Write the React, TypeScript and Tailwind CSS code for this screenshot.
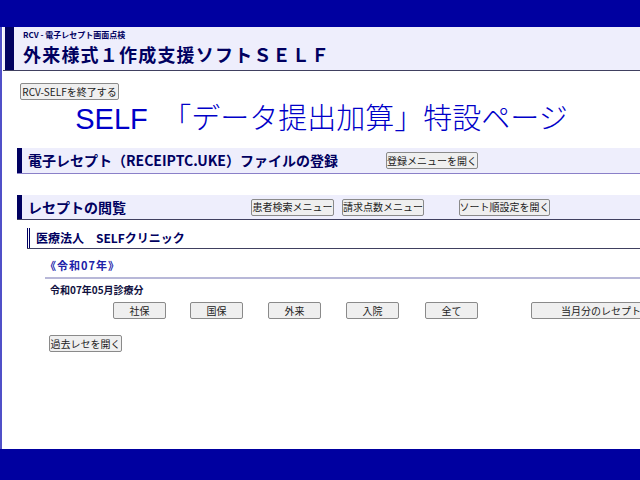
import React from "react";

const jp = { fontFamily: '"Noto Sans CJK JP", "Noto Sans", sans-serif' };

function Btn({ children, className = "" }: { children: React.ReactNode; className?: string }) {
  return (
    <button
      className={
        "h-[17px] border border-[#8a8a8a] bg-[#efefef] rounded-[2px] text-[10px] leading-none text-[#222] px-[5px] flex items-center justify-center whitespace-nowrap shrink-0 " +
        className
      }
      style={jp}
    >
      {children}
    </button>
  );
}

export default function App() {
  return (
    <div className="w-[640px] h-[480px] overflow-hidden flex flex-col bg-white" style={jp}>
      <div className="h-[27px] bg-[#0000a0] shrink-0" />
      <div className="flex-1 border-l-2 border-[#5050c8] pl-[1px] overflow-hidden">
        {/* header */}
        <div className="h-[44px] bg-[#eeeefc] border-b border-[#404060] flex">
          <div className="w-[9px] ml-[2px] bg-[#000060]" />
          <div className="pl-[9px] pt-[3px] flex flex-col">
            <div className="text-[8px] font-bold leading-[10px] text-[#000060]">RCV - 電子レセプト画面点検</div>
            <div className="text-[18px] font-bold leading-[22px] tracking-[1.2px] text-[#000060] mt-[3px] whitespace-nowrap">
              外来様式１作成支援ソフトＳＥＬＦ
            </div>
          </div>
        </div>

        <div className="pl-[17px] pt-[12px]">
          <Btn className="w-[99px]">RCV-SELFを終了する</Btn>
        </div>

        <div className="text-center text-[29px] leading-[34px] text-[#0000c8] font-light -mt-[1px] whitespace-nowrap">
          <span style={{ fontFamily: '"Liberation Sans", sans-serif' }}>SELF</span>　「データ提出加算」特設ページ
        </div>

        {/* section 1 */}
        <div className="ml-[14px] mt-[12px] h-[26px] bg-[#eeeefc] border-b border-[#8a80c8] flex items-center w-[700px]">
          <div className="w-[5px] h-full bg-[#000060]" />
          <div className="pl-[6px] text-[14px] font-bold text-[#000060] w-[364px] whitespace-nowrap">
            電子レセプト（RECEIPTC.UKE）ファイルの登録
          </div>
          <Btn className="w-[92px]">登録メニューを開く</Btn>
        </div>

        {/* section 2 */}
        <div className="ml-[14px] mt-[21px] h-[25px] bg-[#eeeefc] border-b border-[#404060] flex items-center w-[700px]">
          <div className="w-[5px] h-full bg-[#000060]" />
          <div className="pl-[6px] text-[14px] font-bold text-[#000060] w-[229px] whitespace-nowrap">レセプトの閲覧</div>
          <Btn className="w-[83px]">患者検索メニュー</Btn>
          <Btn className="w-[82px] ml-[8px]">請求点数メニュー</Btn>
          <Btn className="w-[91px] ml-[35px]">ソート順設定を開く</Btn>
        </div>

        {/* clinic */}
        <div className="ml-[24px] mt-[8px] h-[21px] flex border-b border-[#404060] w-[700px]">
          <div className="w-[3px] border-l border-r border-[#000060]" />
          <div className="pl-[6px] text-[12px] font-bold text-[#000060] leading-[20px] whitespace-nowrap">医療法人　SELFクリニック</div>
        </div>

        <div className="ml-[42px] mt-[9px] text-[11px] font-bold text-[#2020a8] leading-[14px] tracking-[1px]">《令和07年》</div>
        <div className="ml-[42px] mt-[5px] h-[2px] bg-[#b8b8d8] w-[700px]" />
        <div className="ml-[47px] mt-[4px] text-[10px] font-bold text-[#111140] leading-[13px]">令和07年05月診療分</div>

        <div className="flex ml-[110px] mt-[6px] w-[700px]">
          <Btn className="w-[53px]">社保</Btn>
          <Btn className="w-[53px] ml-[24px]">国保</Btn>
          <Btn className="w-[53px] ml-[25px]">外来</Btn>
          <Btn className="w-[53px] ml-[25px]">入院</Btn>
          <Btn className="w-[53px] ml-[26px]">全て</Btn>
          <Btn className="w-[170px] ml-[53px] text-[9.5px]">当月分のレセプトを開く</Btn>
        </div>

        <div className="ml-[46px] mt-[16px]">
          <Btn className="w-[73px]">過去レセを開く</Btn>
        </div>
      </div>
      <div className="h-[31px] bg-[#0000a0] shrink-0" />
    </div>
  );
}
